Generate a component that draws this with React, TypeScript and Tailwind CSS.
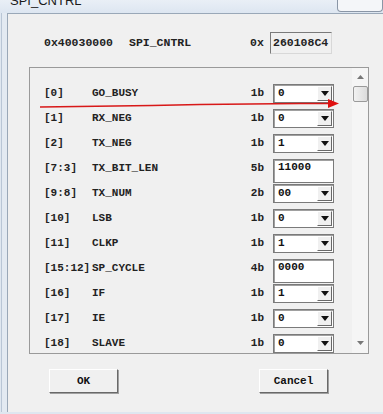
import React from "react";

type Row = { bits: string; name: string; size: string; value: string; kind: "select" | "text" };

const rows: Row[] = [
  { bits: "[0]", name: "GO_BUSY", size: "1b", value: "0", kind: "select" },
  { bits: "[1]", name: "RX_NEG", size: "1b", value: "0", kind: "select" },
  { bits: "[2]", name: "TX_NEG", size: "1b", value: "1", kind: "select" },
  { bits: "[7:3]", name: "TX_BIT_LEN", size: "5b", value: "11000", kind: "text" },
  { bits: "[9:8]", name: "TX_NUM", size: "2b", value: "00", kind: "select" },
  { bits: "[10]", name: "LSB", size: "1b", value: "0", kind: "select" },
  { bits: "[11]", name: "CLKP", size: "1b", value: "1", kind: "select" },
  { bits: "[15:12]", name: "SP_CYCLE", size: "4b", value: "0000", kind: "text" },
  { bits: "[16]", name: "IF", size: "1b", value: "1", kind: "select" },
  { bits: "[17]", name: "IE", size: "1b", value: "0", kind: "select" },
  { bits: "[18]", name: "SLAVE", size: "1b", value: "0", kind: "select" },
];

const mono = "font-['Liberation_Mono','Courier_New',monospace]";

const Select = ({ value }: { value: string }) => (
  <div className="ml-[9px] mr-[18px] flex h-[19px] w-[61px] items-center border border-[#7a7a7a] bg-white shadow-[inset_1px_1px_0_#a0a0a0]">
    <span className="flex-1 pl-[4px] text-[11px] font-bold leading-none text-[#111]">{value}</span>
    <div className="mr-[1px] flex h-[15px] w-[15px] items-center justify-center border border-t-white border-l-white border-r-[#696969] border-b-[#696969] bg-[#f0f0f0]">
      <svg width="8" height="5" viewBox="0 0 8 5">
        <polygon points="0,0 8,0 4,5" fill="#111" />
      </svg>
    </div>
  </div>
);

const TextBox = ({ value }: { value: string }) => (
  <div className="ml-[9px] mr-[18px] mt-[3px] h-[24px] w-[61px] self-start border border-[#7a7a7a] bg-white pl-[4px] pt-[1px] leading-[13px] shadow-[inset_1px_1px_0_#a0a0a0]">
    <span className="text-[11px] font-bold text-[#111]">{value}</span>
  </div>
);

const Scrollbar = () => (
  <div className="flex w-[16px] flex-col items-center bg-[#f5f5f5]">
    <div className="flex h-[18px] items-center justify-center">
      <svg width="7" height="4" viewBox="0 0 7 4">
        <polygon points="0,4 7,4 3.5,0" fill="#777" />
      </svg>
    </div>
    <div className="h-[16px] w-[15px] rounded-[2px] border border-[#9a9a9a] bg-gradient-to-r from-[#f2f2f2] to-[#dcdcdc]" />
    <div className="flex-1" />
    <div className="flex h-[18px] items-center justify-center pb-[2px]">
      <svg width="7" height="4" viewBox="0 0 7 4">
        <polygon points="0,0 7,0 3.5,4" fill="#777" />
      </svg>
    </div>
  </div>
);

const Button = ({ label }: { label: string }) => (
  <button className="flex h-[24px] w-[69px] items-center justify-center border border-t-white border-l-white border-r-[#696969] border-b-[#696969] bg-[#f0f0f0] text-[11px] font-bold text-[#111] shadow-[1px_1px_0_#a0a0a0]">
    {label}
  </button>
);

export default function App() {
  return (
    <div className={`relative h-[414px] w-[383px] overflow-hidden bg-[#dfe7f0] ${mono}`}>
      {/* title bar, mostly scrolled off the top */}
      <div className="flex h-[13px] items-start justify-between bg-gradient-to-b from-[#e9eff6] to-[#dde6f1]">
        <span className="-mt-[7px] ml-[10px] font-['Liberation_Sans',sans-serif] text-[13px] leading-[16px] text-[#1a1a1a]">SPI_CNTRL</span>
        <div className="h-[12px] w-[46px] rounded-b-[4px] border border-t-0 border-[#8a96a6] bg-[#f4f6f9]" />
      </div>

      <div className="flex h-[399px]">
        <div className="ml-[1px] w-[6px] border-l border-[#b9c6d6] bg-[#e3eaf2]" />
        <div className="flex flex-1 flex-col border-l border-t border-[#9aa8b8] bg-[#f0f0f0]">
          {/* header */}
          <div className="mt-[18px] flex h-[22px] items-center text-[11.5px] font-bold text-[#222]">
            <span className="ml-[36px] w-[85px]">0x40030000</span>
            <span className="w-[121px]">SPI_CNTRL</span>
            <span className="w-[20px]">0x</span>
            <div className="flex h-[22px] w-[62px] items-center border border-t-[#7a7a7a] border-l-[#7a7a7a] border-r-[#d8d8d8] border-b-[#d8d8d8] bg-[#f0f0f0] pl-[2px]">
              260108C4
            </div>
          </div>

          {/* register fields */}
          <div className="ml-[21px] mt-[13px] flex h-[287px] w-[340px] border border-[#9a9a9a]">
            <div className="flex flex-1 flex-col overflow-hidden pt-[13px]">
              {rows.map((r) => (
                <div key={r.bits} className="flex h-[25px] shrink-0 items-center text-[11px] font-bold text-[#222]">
                  <span className="w-[62px] pl-[14px]">{r.bits}</span>
                  <span className="flex-1">{r.name}</span>
                  <span>{r.size}</span>
                  {r.kind === "select" ? <Select value={r.value} /> : <TextBox value={r.value} />}
                </div>
              ))}
            </div>
            <Scrollbar />
          </div>

          <div className="mt-[15px] flex">
            <div className="ml-[41px]">
              <Button label="OK" />
            </div>
            <div className="ml-[141px]">
              <Button label="Cancel" />
            </div>
          </div>
        </div>
      </div>

      {/* hand drawn annotation arrow */}
      <svg className="absolute left-0 top-0" width="383" height="414" viewBox="0 0 383 414">
        <polyline
          points="40,107 78,106.5 152,105.5 200,104.5 300,103.5 330,103.5"
          fill="none"
          stroke="#d81818"
          strokeWidth="1.3"
        />
        <polygon points="328,99 339,103.5 328,108" fill="#e01010" />
      </svg>
    </div>
  );
}
